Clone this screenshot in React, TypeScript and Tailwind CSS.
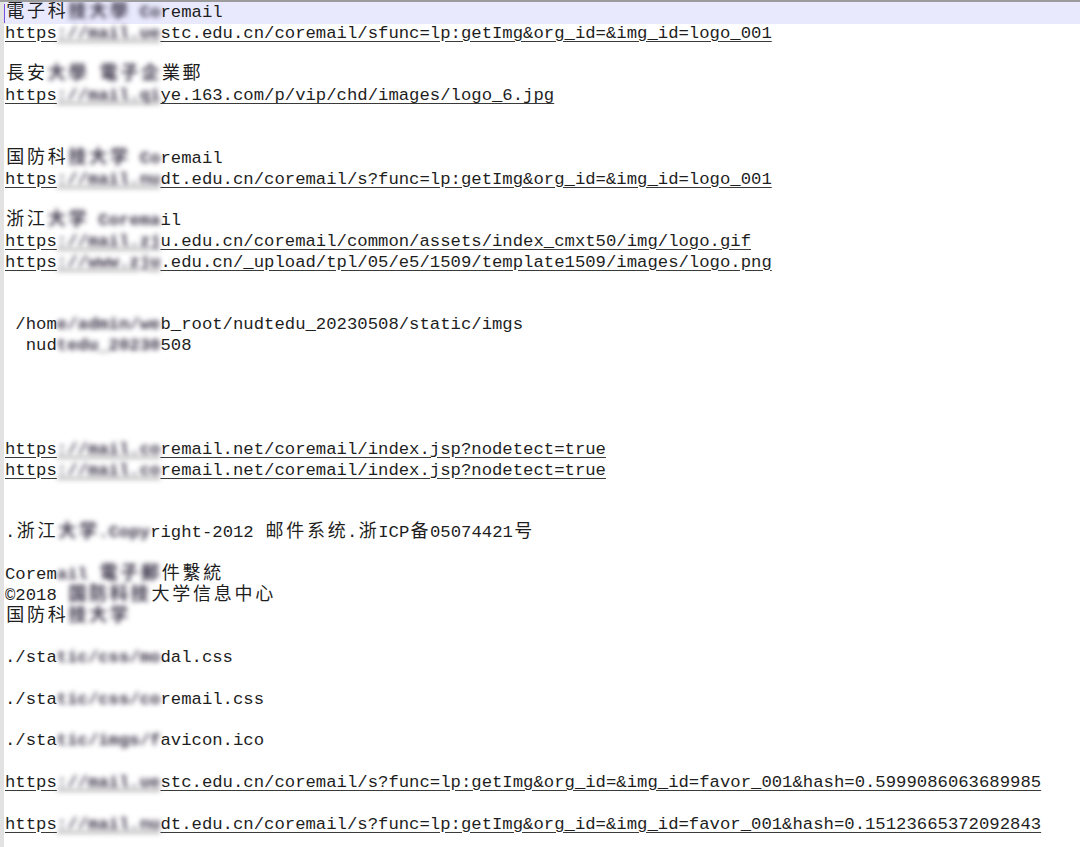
import React from "react";

type Seg = string | [string];
type Line = { t: Seg[]; u?: boolean };

const L = (u: boolean, ...t: Seg[]): Line => ({ t, u });
const B: Line = { t: [] };

const lines: Line[] = [
  L(false, "電子科", ["技大學 Co"], "remail"),
  L(true, "https", ["://mail.ue"], "stc.edu.cn/coremail/sfunc=lp:getImg&org_id=&img_id=logo_001"),
  B,
  L(false, "長安", ["大學 電子企"], "業郵"),
  L(true, "https", ["://mail.qi"], "ye.163.com/p/vip/chd/images/logo_6.jpg"),
  B,
  B,
  L(false, "国防科", ["技大学 Co"], "remail"),
  L(true, "https", ["://mail.nu"], "dt.edu.cn/coremail/s?func=lp:getImg&org_id=&img_id=logo_001"),
  B,
  L(false, "浙江", ["大学 Corema"], "il"),
  L(true, "https", ["://mail.zj"], "u.edu.cn/coremail/common/assets/index_cmxt50/img/logo.gif"),
  L(true, "https", ["://www.zju"], ".edu.cn/_upload/tpl/05/e5/1509/template1509/images/logo.png"),
  B,
  B,
  L(false, " /hom", ["e/admin/we"], "b_root/nudtedu_20230508/static/imgs"),
  L(false, "  nud", ["tedu_20230"], "508"),
  B,
  B,
  B,
  B,
  L(true, "https", ["://mail.co"], "remail.net/coremail/index.jsp?nodetect=true"),
  L(true, "https", ["://mail.co"], "remail.net/coremail/index.jsp?nodetect=true"),
  B,
  B,
  L(false, ".浙江", ["大学.Copy"], "right-2012 邮件系统.浙ICP备05074421号"),
  B,
  L(false, "Corem", ["ail 電子郵"], "件繫統"),
  L(false, "©2018", [" 国防科技"], "大学信息中心"),
  L(false, "国防科", ["技大学"]),
  B,
  L(false, "./sta", ["tic/css/mo"], "dal.css"),
  B,
  L(false, "./sta", ["tic/css/co"], "remail.css"),
  B,
  L(false, "./sta", ["tic/imgs/f"], "avicon.ico"),
  B,
  L(true, "https", ["://mail.ue"], "stc.edu.cn/coremail/s?func=lp:getImg&org_id=&img_id=favor_001&hash=0.5999086063689985"),
  B,
  L(true, "https", ["://mail.nu"], "dt.edu.cn/coremail/s?func=lp:getImg&org_id=&img_id=favor_001&hash=0.15123665372092843"),
];

const CJK = /[\u2E80-\u9FFF\uF900-\uFAFF\uFF00-\uFFEF]/;

// CJK glyphs take two cells, like a fixed-width editor does
function Text({ s }: { s: string }) {
  const out: React.ReactNode[] = [];
  let run = "";
  Array.from(s).forEach((ch, i) => {
    if (CJK.test(ch)) {
      if (run) out.push(run);
      run = "";
      out.push(
        <span key={i} className="inline-block w-[20.74px] text-center text-[18px] leading-none">
          {ch}
        </span>
      );
    } else run += ch;
  });
  if (run) out.push(run);
  return <>{out}</>;
}

const link = "underline underline-offset-[3px] decoration-[#3a3a3a]";

export default function App() {
  return (
    <div className="h-[847px] overflow-hidden bg-white flex border-t-2 border-[#9c9c9c]">
      <div className="w-[4px] bg-[#e2e2e2] shrink-0" />
      <div
        className="flex-1 pt-[1px] text-[17.28px] text-[#1e1e1e]"
        style={{ fontFamily: '"Liberation Mono", "Noto Sans CJK SC", monospace' }}
      >
        {lines.map((line, i) => (
          <div
            key={i}
            className={
              "relative h-[20.82px] leading-[20.82px] whitespace-pre pl-[1px] " +
              (i === 0 ? "bg-[#e9e9fd] -mt-[1px] pt-[1px] h-[21.82px]" : "")
            }
          >
            {i === 0 && <span className="absolute left-0 top-[2px] h-[19px] w-[1px] bg-[#7b4fe0]" />}
            {line.t.map((seg, j) =>
              typeof seg === "string" ? (
                <span key={j} className={line.u ? link : ""}>
                  <Text s={seg} />
                </span>
              ) : (
                <span
                  key={j}
                  className={"inline-block blur-[2.6px] font-bold text-[#3a3348] " + (line.u ? link : "")}
                >
                  <Text s={seg[0]} />
                </span>
              )
            )}
          </div>
        ))}
      </div>
    </div>
  );
}
